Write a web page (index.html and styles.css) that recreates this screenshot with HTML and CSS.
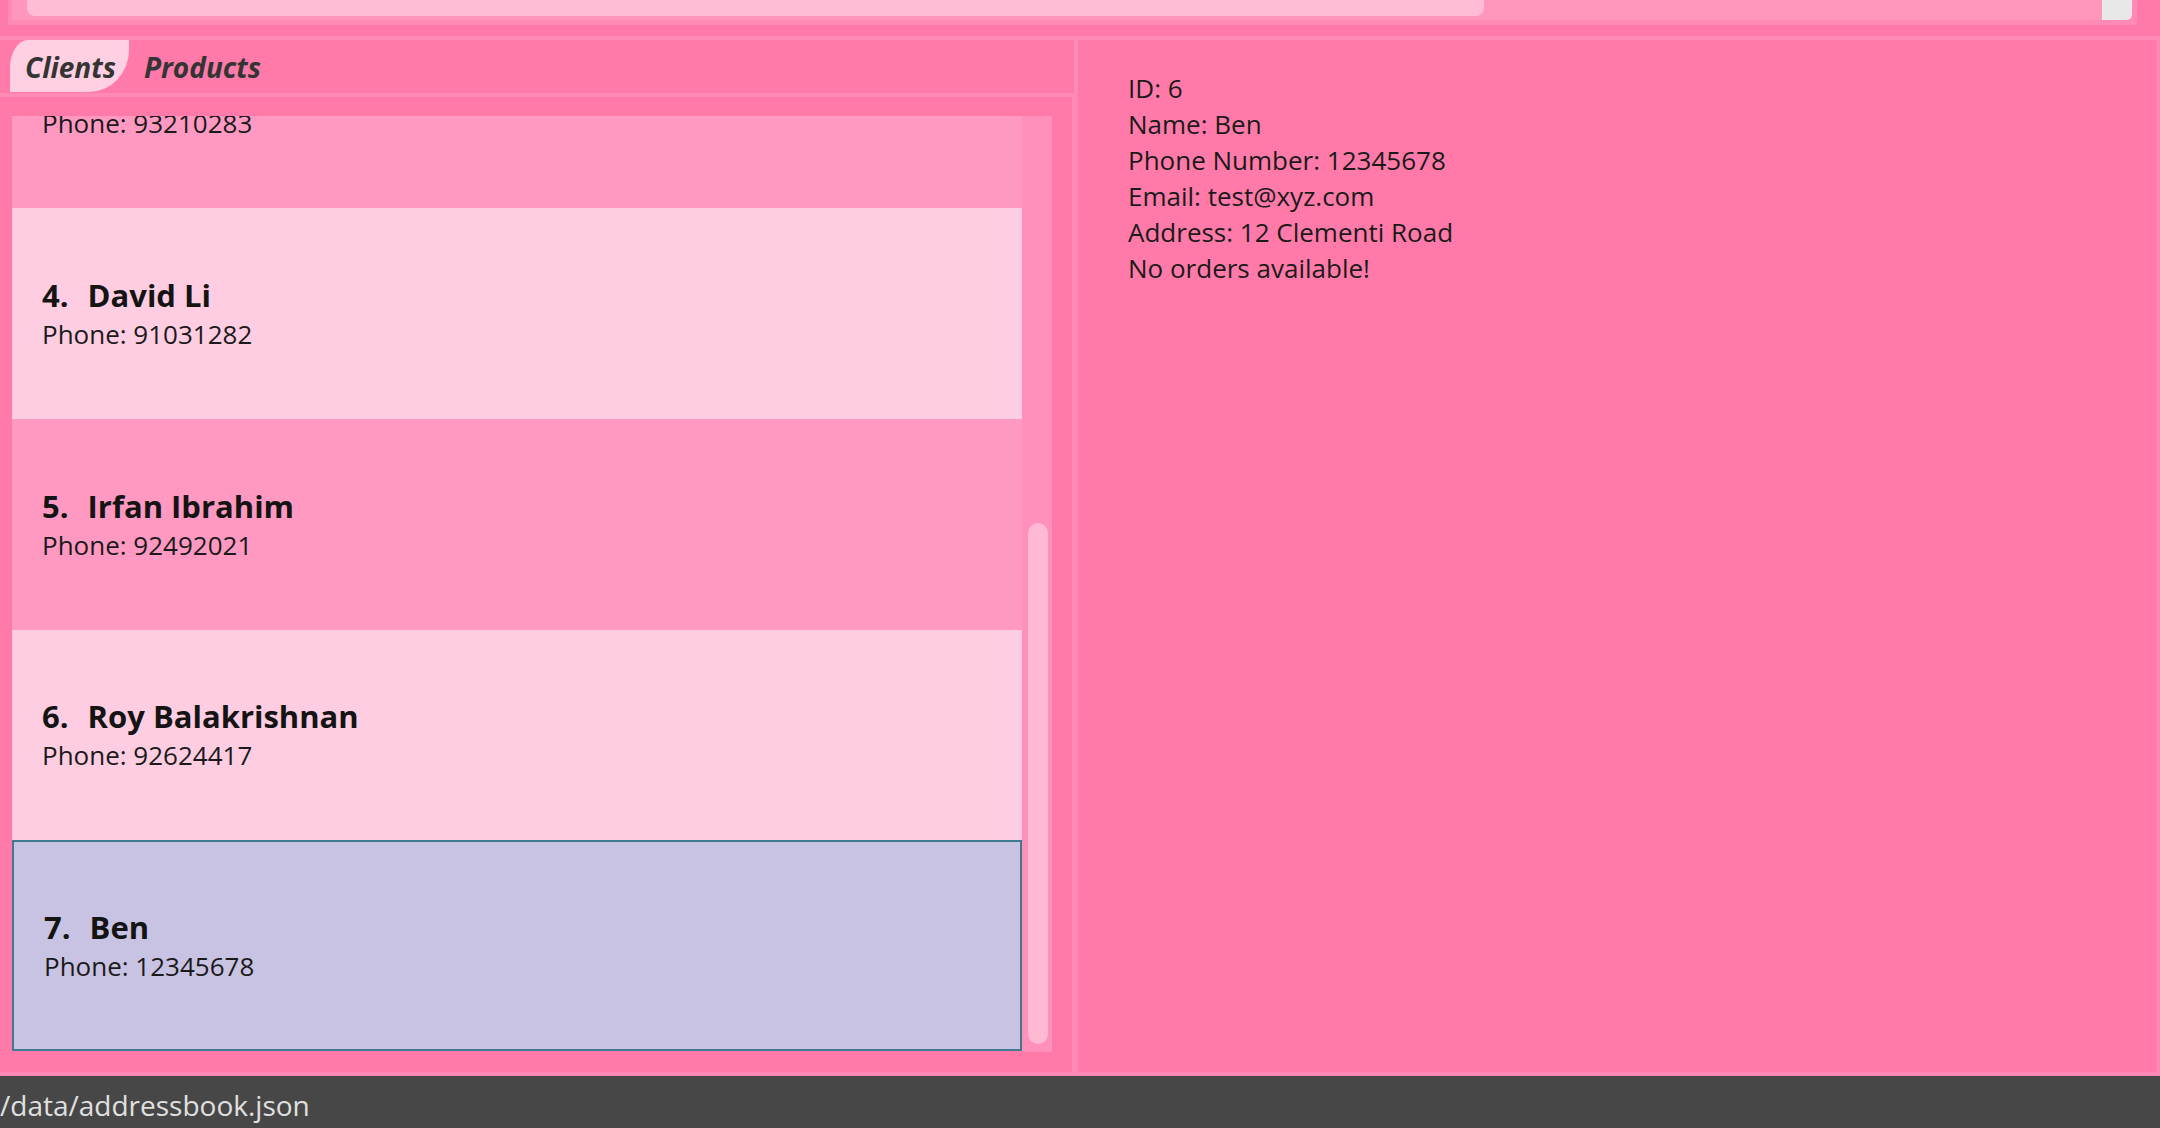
FILE: index.html
```html
<!DOCTYPE html>
<html lang="en">
<head>
<meta charset="utf-8">
<title>Address Book</title>
<link rel="stylesheet" href="styles.css">
</head>
<body>
<div class="app">
  <header class="result">
    <div class="result-frame">
      <div class="hscroll">
        <div class="hthumb"></div>
        <div class="hcorner"></div>
      </div>
    </div>
  </header>
  <main class="split">
    <section class="left">
      <nav class="tabs">
        <div class="tab active">Clients</div>
        <div class="tab">Products</div>
      </nav>
      <div class="list-area">
        <div class="listview">
          <div class="cells">
            <div class="cells-inner">
              <div class="cell odd"><div class="name-row"><span class="idx">1.</span><span class="name">Alex Yeoh</span></div><div class="phone">Phone: 87438807</div></div>
              <div class="cell even"><div class="name-row"><span class="idx">2.</span><span class="name">Bernice Yu</span></div><div class="phone">Phone: 99272758</div></div>
              <div class="cell odd"><div class="name-row"><span class="idx">3.</span><span class="name">Charlotte Oliveiro</span></div><div class="phone">Phone: 93210283</div></div>
              <div class="cell even"><div class="name-row"><span class="idx">4.</span><span class="name">David Li</span></div><div class="phone">Phone: 91031282</div></div>
              <div class="cell odd"><div class="name-row"><span class="idx">5.</span><span class="name">Irfan Ibrahim</span></div><div class="phone">Phone: 92492021</div></div>
              <div class="cell even"><div class="name-row"><span class="idx">6.</span><span class="name">Roy Balakrishnan</span></div><div class="phone">Phone: 92624417</div></div>
              <div class="cell selected"><div class="name-row"><span class="idx">7.</span><span class="name">Ben</span></div><div class="phone">Phone: 12345678</div></div>
            </div>
          </div>
          <div class="vscroll"><div class="vthumb"></div></div>
        </div>
      </div>
    </section>
    <div class="divider"></div>
    <section class="detail">
      <div>ID: 6</div>
      <div>Name: Ben</div>
      <div>Phone Number: 12345678</div>
      <div>Email: test@xyz.com</div>
      <div>Address: 12 Clementi Road</div>
      <div>No orders available!</div>
    </section>
  </main>
  <footer class="status">/data/addressbook.json</footer>
</div>
</body>
</html>
```
FILE: styles.css
```css
html, body {
  margin: 0;
  padding: 0;
}
body {
  background: #ff7aa8;
  font-family: "Open Sans", "Noto Sans", "Liberation Sans", sans-serif;
  overflow: hidden;
}
.app {
  width: 2160px;
  height: 1128px;
  display: flex;
  flex-direction: column;
}

/* top result area (only its horizontal scrollbar is visible) */
.result {
  height: 36px;
  flex: none;
  box-sizing: border-box;
  padding: 0 23px 0 8px;
}
.result-frame {
  height: 25px;
  box-sizing: border-box;
  border-left: 4px solid #ff8ab5;
  border-right: 5px solid #ff8ab5;
  border-bottom: 5px solid #ff8ab5;
}
.hscroll {
  display: flex;
  height: 20px;
  background: #ff97bc;
}
.hthumb {
  margin-left: 15px;
  width: 1457px;
  height: 16px;
  background: #ffbcd4;
  border-radius: 0 0 8px 8px;
}
.hcorner {
  margin-left: auto;
  width: 30px;
  height: 20px;
  background: #e8e8e8;
  border-radius: 0 0 6px 0;
}

/* split pane */
.split {
  flex: 1;
  min-height: 0;
  display: flex;
  border-top: 4px solid #ff8ab5;
  border-bottom: 4px solid #ff8ab5;
  border-right: 3px solid #ff8ab5;
}
.left {
  width: 1074px;
  flex: none;
  display: flex;
  flex-direction: column;
}
.tabs {
  height: 53px;
  flex: none;
  display: flex;
  align-items: flex-start;
  padding-left: 10px;
  border-bottom: 4px solid #ff8ab5;
}
.tab {
  height: 52px;
  box-sizing: border-box;
  padding: 2px 13px 0 15px;
  display: flex;
  align-items: center;
  font-size: 28px;
  font-weight: 700;
  font-style: italic;
  color: #343434;
}
.tab.active {
  background: #ffd0e2;
  border-radius: 18px 0 40px 0 / 28px 0 42px 0;
}
.list-area {
  flex: 1;
  min-height: 0;
  padding: 19px 20px 20px 12px;
  border-right: 2px solid #ff8ab5;
}
.listview {
  height: 100%;
  display: flex;
  overflow: hidden;
}
.cells {
  flex: 1;
  overflow: hidden;
}
.cells-inner {
  margin-top: -540.25px;
}
.cell {
  height: 210.75px;
  box-sizing: border-box;
  padding: 0 0 1px 30px;
  display: flex;
  flex-direction: column;
  justify-content: center;
  color: #1a1a1a;
}
.cell.odd { background: #ff99c1; }
.cell.even { background: #ffcde1; }
.cell.selected {
  background: #c9c3e3;
  border: 2px solid #3e7b91;
}
.name-row {
  font-size: 31px;
  font-weight: 700;
  color: #141414;
  margin-bottom: 0;
}
.idx {
  margin-right: 19px;
}
.phone {
  font-size: 26px;
}
.vscroll {
  width: 30px;
  flex: none;
  box-sizing: border-box;
  background: #ff90bb;
  display: flex;
  flex-direction: column;
  justify-content: flex-end;
  padding: 0 4px 8px 6px;
}
.vthumb {
  height: 521px;
  background: #ffb9d3;
  border-radius: 10px;
}
.divider {
  width: 4px;
  flex: none;
  background: #ff8ab5;
}
.detail {
  flex: 1;
  padding: 30px 0 0 50px;
  font-size: 26px;
  line-height: 36px;
  color: #1a1a1a;
}

/* status bar */
.status {
  height: 52px;
  flex: none;
  box-sizing: border-box;
  background: #474747;
  color: #e0e0e0;
  font-size: 28px;
  line-height: 38px;
  padding: 10px 0 0 0;
  white-space: nowrap;
}
```
